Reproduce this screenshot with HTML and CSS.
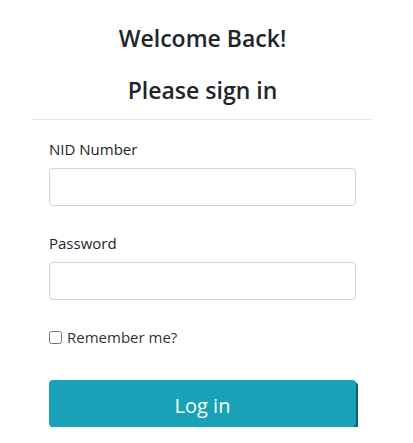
FILE: index.html
```html
<!DOCTYPE html>
<html lang="en">
<head>
<meta charset="utf-8">
<title>Sign in</title>
<link rel="stylesheet" href="styles.css">
</head>
<body>
<main class="card">
  <h1 class="title">Welcome Back!</h1>
  <h2 class="subtitle">Please sign in</h2>
  <hr class="divider">
  <form class="form">
    <div class="group">
      <label class="label" for="nid">NID Number</label>
      <input class="input" id="nid" type="text">
    </div>
    <div class="group">
      <label class="label" for="pw">Password</label>
      <input class="input" id="pw" type="password">
    </div>
    <div class="check">
      <input class="checkbox" id="rem" type="checkbox">
      <label class="check-label" for="rem">Remember me?</label>
    </div>
    <button class="btn" type="button">Log in</button>
  </form>
</main>
</body>
</html>
```
FILE: styles.css
```css
html, body {
  margin: 0;
  padding: 0;
  background: #fff;
}
body {
  font-family: "Open Sans", "Noto Sans", sans-serif;
  color: #212529;
  font-size: 16px;
  line-height: 1.5;
}
.card {
  width: 339px;
  margin-left: 33px;
  padding-top: 22px;
}
.title,
.subtitle {
  margin: 0;
  text-align: center;
  font-size: 23px;
  font-weight: 600;
  line-height: 32px;
  color: #212529;
}
.subtitle {
  margin-top: 20px;
}
.divider {
  margin: 13px 0 0;
  border: 0;
  border-top: 1px solid #e6e6e6;
}
.form {
  padding: 17px 16px 0;
}
.group {
  margin-bottom: 25px;
}
.label {
  display: block;
  font-size: 15px;
  line-height: 24px;
  margin-bottom: 7px;
  color: #212529;
}
.input {
  display: block;
  box-sizing: border-box;
  width: 100%;
  height: 38px;
  border: 1px solid #ced4da;
  border-radius: 4px;
  background: #fff;
  margin: 0;
}
.check {
  display: flex;
  align-items: center;
  gap: 5px;
  height: 24px;
}
.checkbox {
  margin: 0;
  width: 13px;
  height: 13px;
}
.check-label {
  font-size: 15px;
  color: #333;
}
.btn {
  display: block;
  box-sizing: border-box;
  width: 100%;
  height: 47px;
  margin-top: 31px;
  padding: 3px 0 0;
  border: 0;
  border-radius: 4px;
  background: #19a2b7;
  color: #fff;
  font-family: inherit;
  font-size: 20px;
  box-shadow: 2px 2px 0 #0d5f6b;
}
```
